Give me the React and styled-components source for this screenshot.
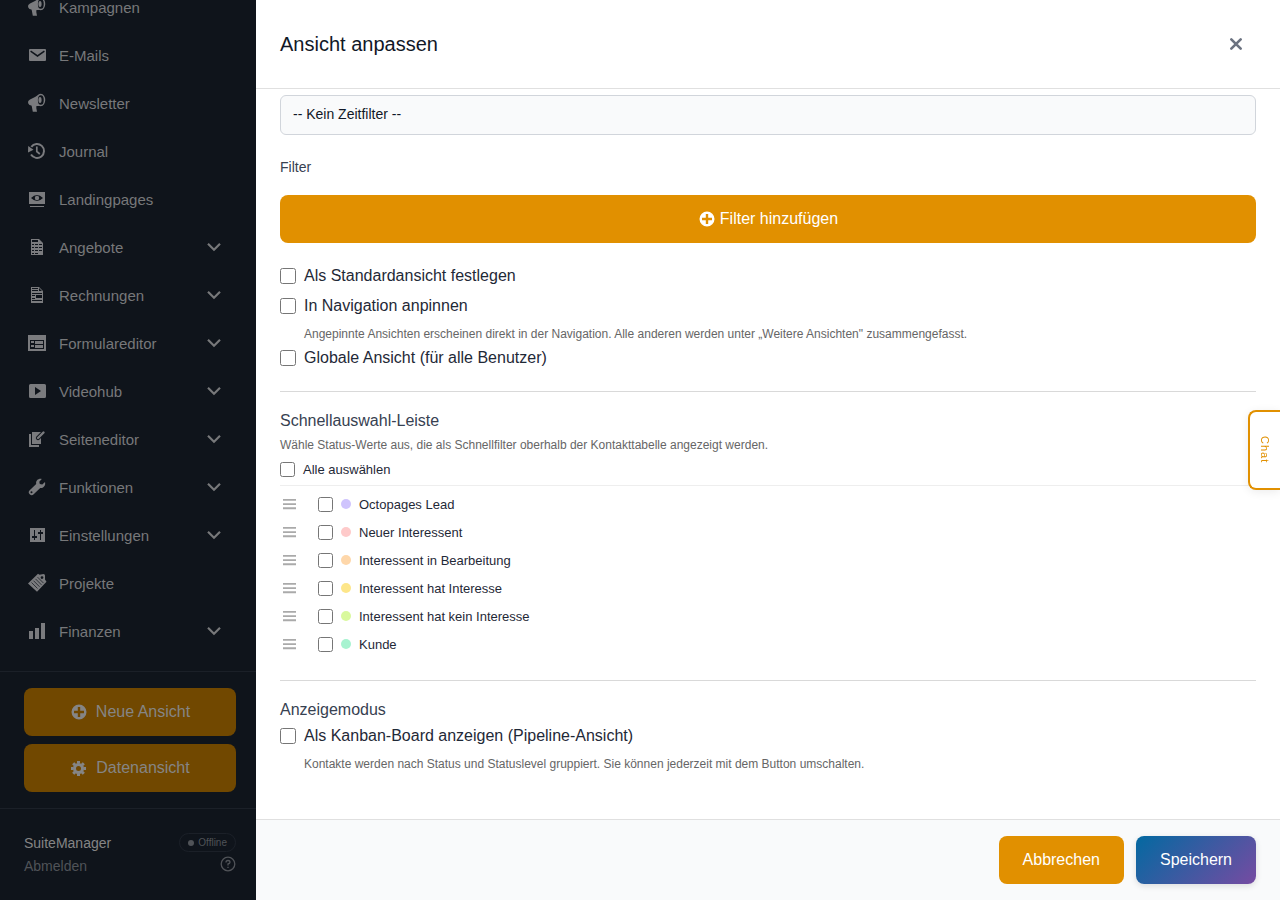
import { useState } from 'react';
import styled, { createGlobalStyle } from 'styled-components';

const colors = {
  night: '#0f141b',
  nightLine: '#1b2028',
  nightText: '#77787a',
  nightMuted: '#505358',
  icon: '#7a7b7e',
  orange: '#e19000',
  orangeDim: '#714800',
  text: '#1f2937',
  label: '#374151',
  hint: '#666666',
  line: '#e0e0e0',
};

const GlobalStyle = createGlobalStyle`
  * {
    box-sizing: border-box;
  }
  body {
    margin: 0;
    background: ${colors.night};
    font-family: 'Liberation Sans', Arial, sans-serif;
  }
  button, select, input {
    font-family: inherit;
  }
`;

const Page = styled.div`
  display: flex;
  height: 100vh;
  overflow: hidden;
`;
const Sidebar = styled.aside`
  display: flex;
  flex-direction: column;
  flex: 0 0 256px;
  background: ${colors.night};
  color: ${colors.nightText};
`;
const Nav = styled.nav`
  display: flex;
  flex: 1;
  flex-direction: column;
  justify-content: flex-end;
  min-height: 0;
  overflow: hidden;
  padding: 0 32px 16px 24px;
`;
const NavLink = styled.a`
  display: flex;
  align-items: center;
  flex: 0 0 48px;
  gap: 9px;
  font-size: 15px;
  color: inherit;
  text-decoration: none;
`;
const NavLabel = styled.span`
  flex: 1;
  padding-top: 1px;
`;
const Icon = styled.svg`
  flex: none;
  width: ${({ $size }) => $size}px;
  height: ${({ $size }) => $size}px;
  fill: ${({ $line }) => ($line ? 'none' : 'currentColor')};
  stroke: ${({ $line }) => ($line ? 'currentColor' : 'none')};
`;
const NavIcon = styled.span`
  display: flex;
  justify-content: center;
  width: 26px;
  color: ${colors.icon};
`;
const SideActions = styled.div`
  display: flex;
  flex-direction: column;
  gap: 8px;
  padding: 16px 20px 16px 24px;
  border-top: 1px solid ${colors.nightLine};
`;
const SideButton = styled.button`
  display: flex;
  align-items: center;
  justify-content: center;
  gap: 9px;
  height: 48px;
  padding: 0 6px 0 7px;
  border: 0;
  border-radius: 8px;
  background: ${colors.orangeDim};
  color: #858585;
  font-size: 16px;
`;
const SideFooter = styled.footer`
  padding: 24px 20px 24px 24px;
  border-top: 1px solid ${colors.nightLine};
`;
const FooterRow = styled.div`
  display: flex;
  align-items: center;
  justify-content: space-between;
  height: ${({ $height }) => $height}px;
`;
const UserName = styled.span`
  padding-top: 1px;
  color: #858585;
  font-size: 14px;
`;
const Logout = styled.a`
  padding-top: 4px;
  color: ${colors.nightMuted};
  font-size: 14px;
  text-decoration: none;
`;
const Status = styled.span`
  display: flex;
  align-items: center;
  gap: 4px;
  height: 19px;
  padding: 0 8px;
  border: 1px solid ${colors.nightLine};
  border-radius: 10px;
  color: ${colors.nightMuted};
  font-size: 10px;
`;
const StatusDot = styled.span`
  width: 6px;
  height: 6px;
  border-radius: 50%;
  background: ${colors.nightMuted};
`;
const HelpButton = styled.button`
  display: flex;
  padding: 0;
  border: 0;
  background: none;
  color: ${colors.nightMuted};
`;

const Panel = styled.main`
  display: flex;
  flex: 1;
  flex-direction: column;
  min-width: 0;
  background: #ffffff;
  color: ${colors.text};
`;
const PanelHeader = styled.header`
  display: flex;
  align-items: center;
  justify-content: space-between;
  flex: 0 0 89px;
  padding: 0 36px 0 24px;
  border-bottom: 1px solid ${colors.line};
`;
const Title = styled.h1`
  margin: 0;
  color: #111827;
  font-size: 20px;
  font-weight: 400;
`;
const CloseButton = styled.button`
  display: flex;
  padding: 0;
  border: 0;
  background: none;
  color: #6b7280;
`;
const PanelBody = styled.div`
  flex: 1;
  min-height: 0;
  overflow: hidden;
  padding: 6px 24px 24px;
`;
const Select = styled.select`
  display: block;
  width: 100%;
  height: 40px;
  padding: 0 12px 2px;
  border: 1px solid #d1d5db;
  border-radius: 6px;
  appearance: none;
  background: #f9fafb;
  color: #111827;
  font-size: 14px;
`;
const FilterLabel = styled.h2`
  margin: 22px 0 18px;
  color: ${colors.label};
  font-size: 14px;
  font-weight: 400;
  line-height: 20px;
`;
const AddButton = styled.button`
  display: flex;
  align-items: center;
  justify-content: center;
  gap: 5px;
  width: 100%;
  height: 48px;
  margin-bottom: 18px;
  padding: 0 6px 0 7px;
  border: 0;
  border-radius: 8px;
  background: ${colors.orange};
  color: #ffffff;
  font-size: 16px;
`;
const CheckLabel = styled.label`
  display: flex;
  align-items: center;
  gap: 8px;
  height: 30px;
  font-size: 16px;
`;
const Checkbox = styled.input`
  flex: none;
  width: ${({ $small }) => ($small ? 15 : 16)}px;
  height: ${({ $small }) => ($small ? 15 : 16)}px;
  margin: 0;
`;
const Hint = styled.p`
  margin: 0;
  padding: 4px 0 0 ${({ $indent }) => ($indent ? 24 : 0)}px;
  color: ${colors.hint};
  font-size: 12px;
  line-height: 18px;
`;
const Section = styled.section`
  margin-top: ${({ $gap }) => $gap}px;
  padding-top: 18px;
  border-top: 1px solid #d9d9d9;
`;
const SectionTitle = styled.h2`
  margin: 0;
  color: ${colors.label};
  font-size: 16px;
  font-weight: 400;
  line-height: 22px;
`;
const SelectAll = styled.label`
  display: flex;
  align-items: center;
  gap: 8px;
  height: 32px;
  margin: 0 0 4px;
  padding-bottom: 1px;
  border-bottom: 1px solid #eeeeee;
  font-size: 13px;
`;
const StatusList = styled.ul`
  margin: 0;
  padding: 0;
  list-style: none;
`;
const StatusRow = styled.li`
  display: flex;
  align-items: center;
  gap: 22px;
  height: 28px;
  padding-left: 2px;
  color: #aaaaaa;
`;
const StatusLabel = styled.label`
  display: flex;
  align-items: center;
  gap: 8px;
  color: ${colors.text};
  font-size: 13px;
`;
const ColorDot = styled.span`
  width: 10px;
  height: 10px;
  border-radius: 50%;
  background: ${({ $color }) => $color};
`;
const PanelFooter = styled.footer`
  display: flex;
  justify-content: flex-end;
  gap: 12px;
  padding: 16px 24px;
  border-top: 1px solid ${colors.line};
  background: #f9fafb;
`;
const FooterButton = styled.button`
  height: 48px;
  padding: 0 24px;
  border: 0;
  border-radius: 8px;
  background: ${({ $primary }) => ($primary ? 'linear-gradient(135deg, #0369a1 0%, #764ba2 100%)' : colors.orange)};
  box-shadow: ${({ $primary }) => ($primary ? '0 2px 6px rgba(0, 0, 0, 0.12)' : 'none')};
  color: #ffffff;
  font-size: 16px;
`;
const ChatTab = styled.button`
  position: fixed;
  top: 410px;
  right: 0;
  display: flex;
  align-items: center;
  justify-content: center;
  width: 32px;
  height: 80px;
  padding: 0;
  border: 2px solid ${colors.orange};
  border-right: 0;
  border-radius: 8px 0 0 8px;
  background: #ffffff;
  box-shadow: 0 2px 10px rgba(0, 0, 0, 0.08);
  color: ${colors.orange};
  font-size: 11px;
  letter-spacing: 1px;
  writing-mode: vertical-rl;
`;

const drawings = {
  megaphone: (
    <>
      <path d="M1 9Q1 7.500 3 6.500L8 4 13 .8Q9 7 14 13L6 13 2.500 12Q1 11 1 9Z" />
      <path d="M4.500 12h5L9.300 15l.7 3.800H5.800Z" />
      <ellipse cx="13.800" cy="7" rx="3.700" ry="5.600" fill={colors.night} stroke="currentColor" strokeWidth="1.500" />
      <ellipse cx="13" cy="7" rx="1.600" ry="3" />
    </>
  ),
  mail: <path fillRule="evenodd" d="M3 4h15q1 0 1 1v10q0 1-1 1H3q-1 0-1-1V5q0-1 1-1Zm.2 2.800 7.300 5.200 7.300-5.200-.8-1.300-6.500 4.600L4 5.500Z" />,
  history: (
    <>
      <path d="M4.300 5.900A7 7 0 1 1 4 13.600" fill="none" stroke="currentColor" strokeWidth="2" />
      <path d="M1.200 5 1 11.500 6.500 8.800Z" />
      <path d="M9.800 5.500v5l3 2.500" fill="none" stroke="currentColor" strokeWidth="1.700" />
    </>
  ),
  landing: (
    <>
      <path fillRule="evenodd" d="M2 3h16v12H2Zm2 6q6 6 12 0-6-6-12 0Z" />
      <circle cx="10" cy="9" r="2.200" />
      <path d="M3 17h14v1H3Z" />
    </>
  ),
  sheet: <path fillRule="evenodd" d="M4 2h8l4 4v12H4Zm1 1v2h6V3Zm0 4v1h2V7Zm3 0v1h3V7Zm4 0v1h3V7ZM5 10v1h2v-1Zm3 0v1h3v-1Zm4 0v1h3v-1Zm-7 3v1h2v-1Zm3 0v1h3v-1Zm4 0v1h3v-1Zm-7 3v1h2v-1Zm3 0v1h3v-1Z" />,
  invoice: <path fillRule="evenodd" d="M4 2h8l4 4v12H4Zm1 1v1h6V3Zm0 2v1h6V5Zm7-2v3h3ZM5 8v1h10V8Zm0 2v1h3v-1Zm4 0v3h6v-3Zm-4 3v1h3v-1Zm0 2v1h10v-1Z" />,
  form: <path fillRule="evenodd" d="M1 2h18v16H1Zm2 5v9h14V7Zm1 1h3v2H4Zm4 0h8v3H8Zm-4 4h3v2H4Zm4 0h8v3H8Z" />,
  video: <path fillRule="evenodd" d="M3.500 3h14Q19 3 19 4.500v11q0 1.500-1.500 1.500h-14Q2 17 2 15.500v-11Q2 3 3.500 3ZM8 6v8l6-4Z" />,
  editor: (
    <>
      <path d="M2 5h2v11h8v2H2ZM5 3h9v12H5Z" />
      <path d="m11 9 5.500-5.500" stroke={colors.night} strokeWidth="4.200" strokeLinecap="round" />
      <path d="m11 9 5.500-5.500" stroke="currentColor" strokeWidth="2.400" strokeLinecap="round" />
    </>
  ),
  wrench: <path fillRule="evenodd" d="M18 5 15.300 7.500 12.800 7 12.300 4.800 14.800 2C11.500 1.200 8.500 3.500 9.200 7L2.700 13.200a2.800 2.800 0 1 0 4 4L13.200 11C17 11.500 18.800 8 18 5ZM4.500 14.300a1 1 0 1 1 0 2 1 1 0 0 1 0-2Z" />,
  sliders: (
    <path fillRule="evenodd" d="M3 3h15v14H3Zm4 2v6H5v2h2v2h1v-2h2v-2H8V5Zm6 0v2h-2v2h2v6h1V9h2V7h-2V5Z" />
  ),
  tag: (
    <>
      <path fillRule="evenodd" d="M1 10.500 11 .8l1.500 1 4-.8q1.500 0 1.500 1.500v4l1.500 2.300L10 18.800Zm14-7.300a1.400 1.400 0 1 0 0 2.800 1.400 1.400 0 0 0 0-2.800Z" />
      <path d="m4.500 9.500 6 6M6.500 7.700l6 6M8.500 5.900l6 6M10.500 4.100l6 6" stroke={colors.night} strokeWidth=".7" />
    </>
  ),
  bars: <path d="M2 10h4v8H2ZM8 7h4v11H8ZM14 2h4v16h-4Z" />,
};

const navItems = [
  { label: 'Kampagnen', icon: 'megaphone' },
  { label: 'E-Mails', icon: 'mail' },
  { label: 'Newsletter', icon: 'megaphone' },
  { label: 'Journal', icon: 'history' },
  { label: 'Landingpages', icon: 'landing' },
  { label: 'Angebote', icon: 'sheet', more: true },
  { label: 'Rechnungen', icon: 'invoice', more: true },
  { label: 'Formulareditor', icon: 'form', more: true },
  { label: 'Videohub', icon: 'video', more: true },
  { label: 'Seiteneditor', icon: 'editor', more: true },
  { label: 'Funktionen', icon: 'wrench', more: true },
  { label: 'Einstellungen', icon: 'sliders', more: true },
  { label: 'Projekte', icon: 'tag' },
  { label: 'Finanzen', icon: 'bars', more: true },
];

const statuses = [
  { label: 'Octopages Lead', color: '#cfc4fd' },
  { label: 'Neuer Interessent', color: '#fecaca' },
  { label: 'Interessent in Bearbeitung', color: '#fed7aa' },
  { label: 'Interessent hat Interesse', color: '#fde68a' },
  { label: 'Interessent hat kein Interesse', color: '#d9f99d' },
  { label: 'Kunde', color: '#a7f3d0' },
];

function PlusIcon() {
  return (
    <Icon $size={16} viewBox="0 0 16 16" aria-hidden="true">
      <path fillRule="evenodd" d="M8 .5a7.500 7.500 0 1 0 0 15 7.500 7.500 0 0 0 0-15ZM6.800 3h2.400v3.800H13v2.400H9.200V13H6.800V9.200H3V6.800h3.800Z" />
    </Icon>
  );
}

function GearIcon() {
  return (
    <Icon $size={16} viewBox="0 0 16 16" aria-hidden="true">
      <circle cx="7.500" cy="8.500" r="4" fill="none" stroke="currentColor" strokeWidth="3" />
      {[0, 45, 90, 135].map((angle) => (
        <path key={angle} d="M6 1h3v2.500H6Zm0 12.500h3V16H6Z" transform={`rotate(${angle} 7.500 8.500)`} />
      ))}
    </Icon>
  );
}

function NavItem({ label, icon, more }) {
  return (
    <NavLink href="#">
      <NavIcon>
        <Icon $size={20} viewBox="0 0 20 20" aria-hidden="true">{drawings[icon]}</Icon>
      </NavIcon>
      <NavLabel>{label}</NavLabel>
      {more && (
        <Icon $size={20} $line viewBox="0 0 20 20" aria-hidden="true">
          <path d="m4 6.700 6 6 6-6" strokeWidth="2.200" />
        </Icon>
      )}
    </NavLink>
  );
}

function StatusItem({ label, color, checked, onChange }) {
  return (
    <StatusRow>
      <Icon $size={14} $line viewBox="0 0 14 14" aria-hidden="true">
        <path d="M1 2.900h13M1 7.100h13M1 11.200h13" strokeWidth="1.900" />
      </Icon>
      <StatusLabel>
        <Checkbox type="checkbox" $small checked={checked} onChange={onChange} />
        <ColorDot $color={color} />
        {label}
      </StatusLabel>
    </StatusRow>
  );
}

function App() {
  const [selected, setSelected] = useState([]);

  const toggle = (label) => {
    setSelected((old) => (old.includes(label) ? old.filter((item) => item !== label) : [...old, label]));
  };
  const toggleAll = (event) => {
    setSelected(event.target.checked ? statuses.map((status) => status.label) : []);
  };

  return (
    <Page>
      <GlobalStyle />
      <Sidebar>
        <Nav>
          {navItems.map((item) => <NavItem key={item.label} {...item} />)}
        </Nav>
        <SideActions>
          <SideButton type="button">
            <PlusIcon />
            Neue Ansicht
          </SideButton>
          <SideButton type="button">
            <GearIcon />
            Datenansicht
          </SideButton>
        </SideActions>
        <SideFooter>
          <FooterRow $height={19}>
            <UserName>SuiteManager</UserName>
            <Status>
              <StatusDot />
              Offline
            </Status>
          </FooterRow>
          <FooterRow $height={24}>
            <Logout href="#">Abmelden</Logout>
            <HelpButton type="button" aria-label="Hilfe">
              <Icon $size={16} $line viewBox="0 0 16 16" aria-hidden="true">
                <circle cx="8" cy="8" r="6.800" strokeWidth="1.300" />
                <path d="M6 6.500q0-2 2-2t2 1.800Q10 7.500 8 8v1.500M8 10.700V12" strokeWidth="1.300" />
              </Icon>
            </HelpButton>
          </FooterRow>
        </SideFooter>
      </Sidebar>

      <Panel>
        <PanelHeader>
          <Title>Ansicht anpassen</Title>
          <CloseButton type="button" aria-label="Schließen">
            <Icon $size={16} $line viewBox="0 0 16 16" aria-hidden="true">
              <path d="m3.300 3.300 9.400 9.400M12.700 3.300l-9.400 9.400" strokeWidth="2.600" strokeLinecap="round" />
            </Icon>
          </CloseButton>
        </PanelHeader>
        <PanelBody>
          <Select aria-label="Zeitfilter">
            <option>-- Kein Zeitfilter --</option>
          </Select>
          <FilterLabel>Filter</FilterLabel>
          <AddButton type="button">
            <PlusIcon />
            Filter hinzufügen
          </AddButton>
          <CheckLabel>
            <Checkbox type="checkbox" />
            Als Standardansicht festlegen
          </CheckLabel>
          <CheckLabel>
            <Checkbox type="checkbox" />
            In Navigation anpinnen
          </CheckLabel>
          <Hint $indent>
            Angepinnte Ansichten erscheinen direkt in der Navigation. Alle anderen werden unter „Weitere Ansichten&quot; zusammengefasst.
          </Hint>
          <CheckLabel>
            <Checkbox type="checkbox" />
            Globale Ansicht (für alle Benutzer)
          </CheckLabel>

          <Section $gap={18}>
            <SectionTitle>Schnellauswahl-Leiste</SectionTitle>
            <Hint>Wähle Status-Werte aus, die als Schnellfilter oberhalb der Kontakttabelle angezeigt werden.</Hint>
            <SelectAll>
              <Checkbox type="checkbox" $small checked={selected.length === statuses.length} onChange={toggleAll} />
              Alle auswählen
            </SelectAll>
            <StatusList>
              {statuses.map((status) => (
                <StatusItem
                  key={status.label}
                  {...status}
                  checked={selected.includes(status.label)}
                  onChange={() => toggle(status.label)}
                />
              ))}
            </StatusList>
          </Section>

          <Section $gap={22}>
            <SectionTitle>Anzeigemodus</SectionTitle>
            <CheckLabel>
              <Checkbox type="checkbox" />
              Als Kanban-Board anzeigen (Pipeline-Ansicht)
            </CheckLabel>
            <Hint $indent>
              Kontakte werden nach Status und Statuslevel gruppiert. Sie können jederzeit mit dem Button umschalten.
            </Hint>
          </Section>
        </PanelBody>
        <PanelFooter>
          <FooterButton type="button">Abbrechen</FooterButton>
          <FooterButton type="button" $primary>Speichern</FooterButton>
        </PanelFooter>
      </Panel>
      <ChatTab type="button">Chat</ChatTab>
    </Page>
  );
}

export default App;
